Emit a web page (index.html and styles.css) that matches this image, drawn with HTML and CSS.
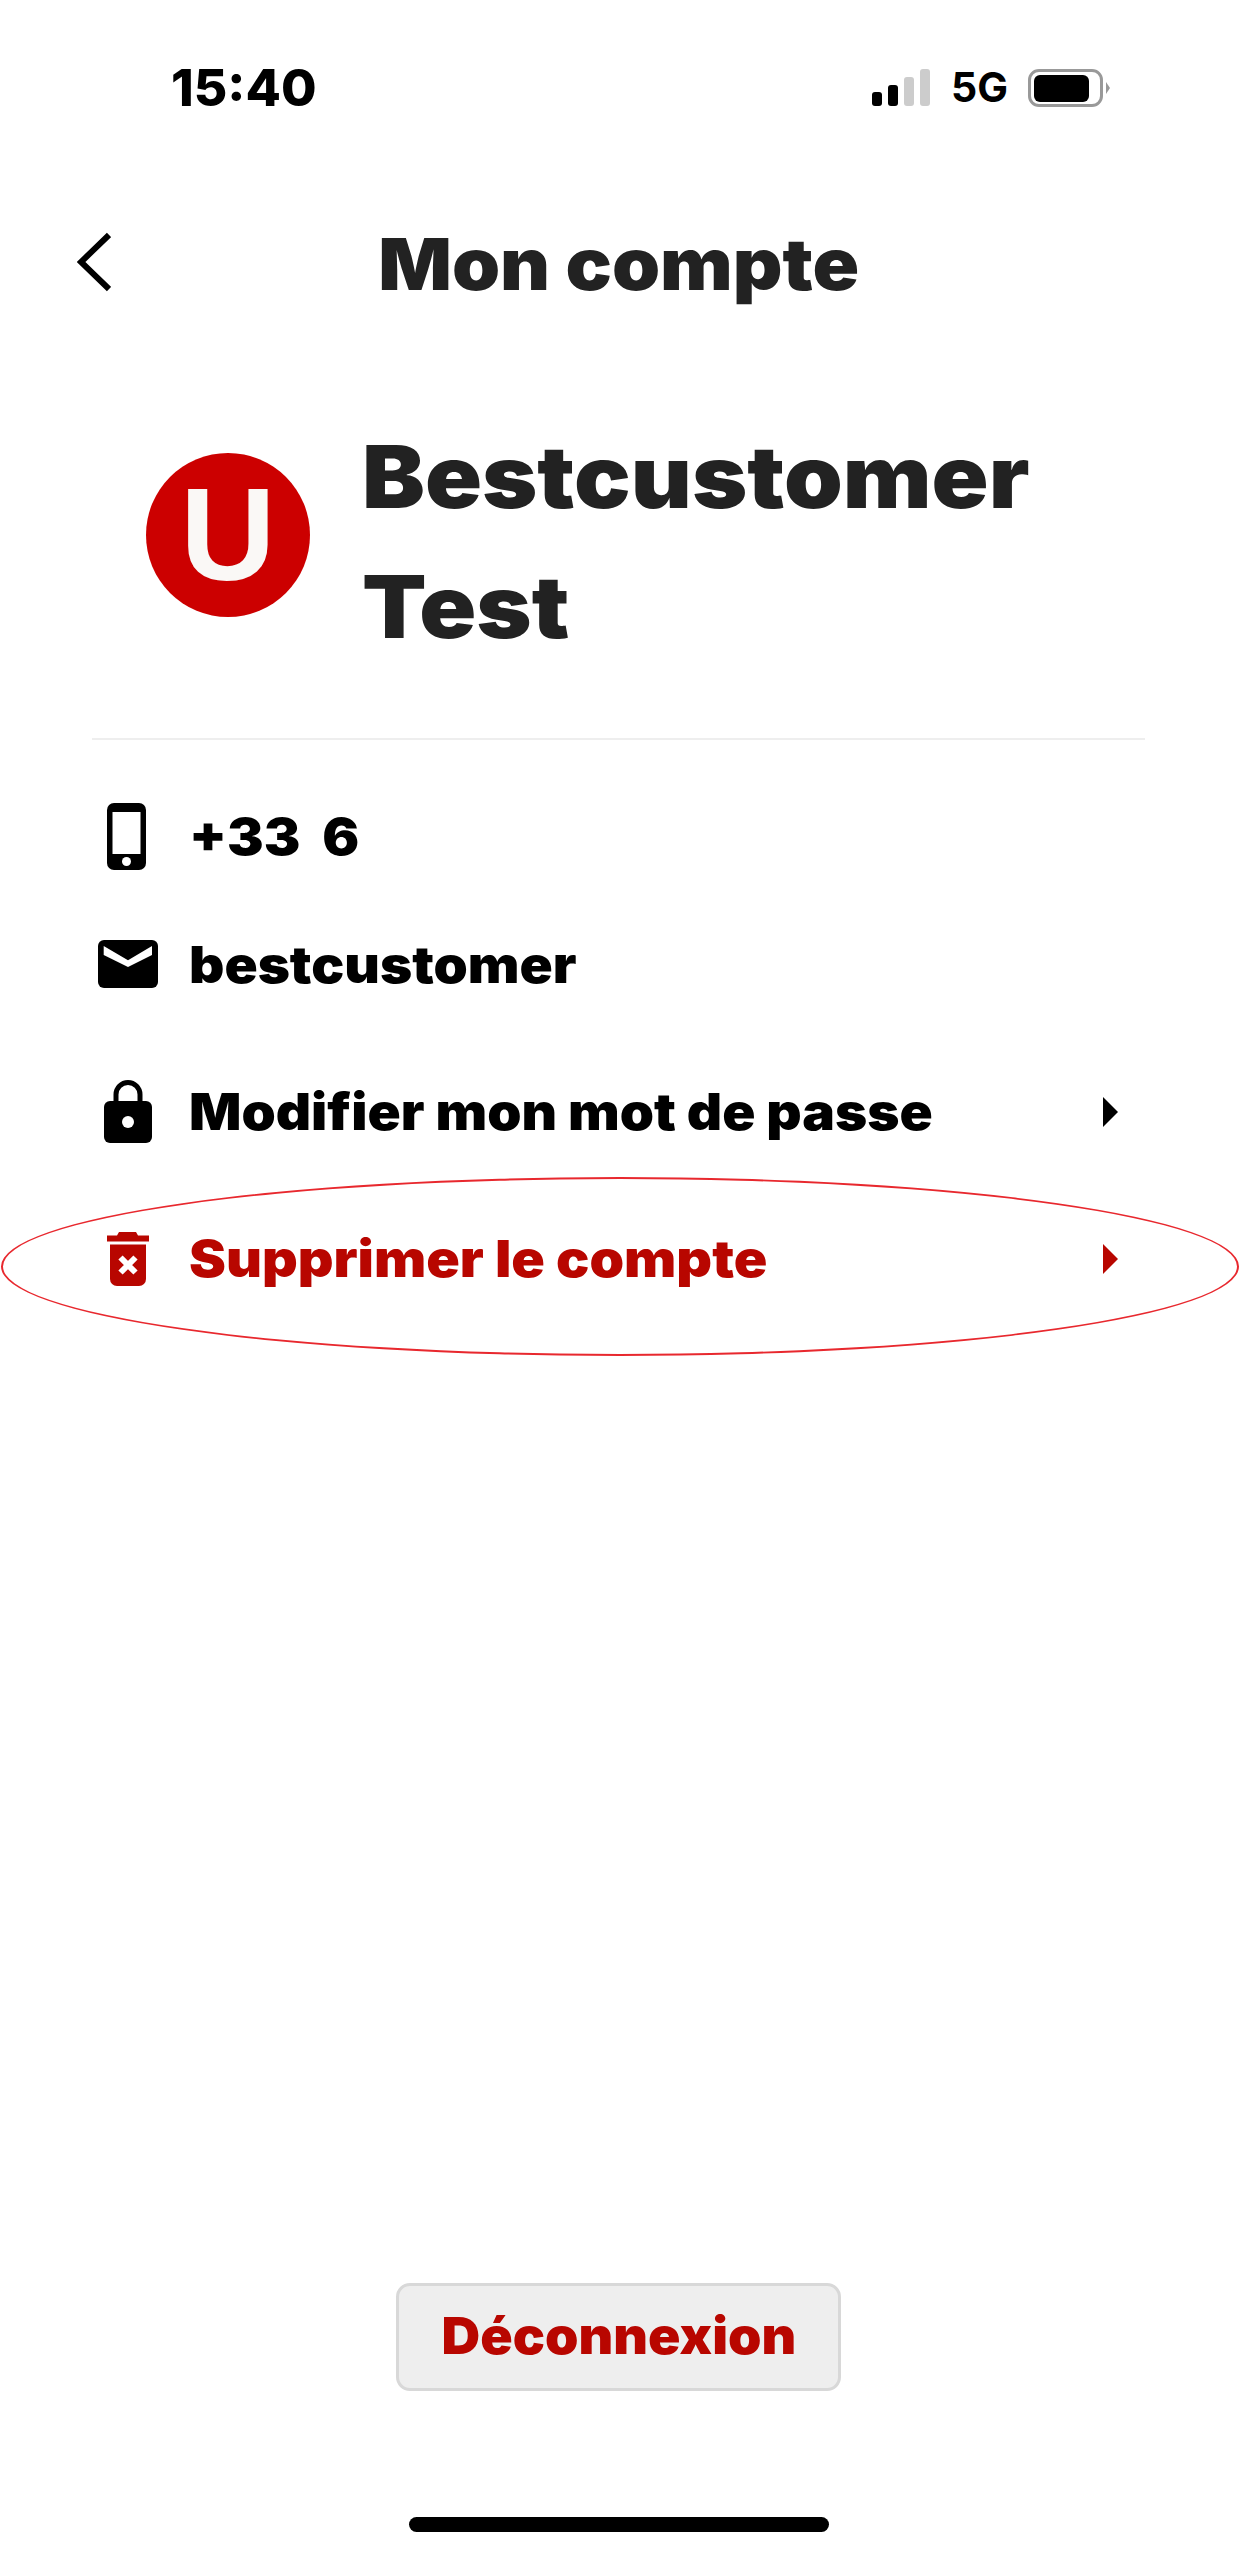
FILE: index.html
```html
<!DOCTYPE html>
<html lang="fr">
<head>
    <meta charset="UTF-8">
    <meta name="viewport" content="width=device-width, initial-scale=1">
    <title>Mon compte</title>
    <link rel="stylesheet" href="styles.css">
</head>
<body>
    <div class="status-bar">
        <span class="time">15:40</span>
        <div class="status-icons">
            <div class="signal">
                <span class="bar bar-1"></span>
                <span class="bar bar-2"></span>
                <span class="bar bar-3"></span>
                <span class="bar bar-4"></span>
            </div>
            <span class="network">5G</span>
            <div class="battery"><span class="battery-level"></span></div>
            <span class="battery-tip"></span>
        </div>
    </div>

    <header class="nav">
        <svg class="back" width="34" height="60" viewBox="0 0 34 60">
            <polyline points="32,3 4,30 32,57" fill="none" stroke="#000" stroke-width="6"/>
        </svg>
        <h2 class="nav-title">Mon compte</h2>
    </header>

    <section class="profile">
        <div class="avatar">U</div>
        <h1 class="name">Bestcustomer<br>Test</h1>
    </section>

    <main class="account-list">
        <div class="row info-row">
            <span class="row-icon phone-icon">
                <svg width="39" height="67" viewBox="0 0 39 67">
                    <rect width="39" height="67" rx="7" fill="#000"/>
                    <rect x="5.500" y="9" width="28" height="42" fill="#fff"/>
                    <circle cx="19.500" cy="58.500" r="4.500" fill="#fff"/>
                </svg>
            </span>
            <span class="row-label">+33&nbsp;&nbsp;6</span>
        </div>
        <div class="row info-row">
            <span class="row-icon">
                <svg width="60" height="48" viewBox="0 0 60 48">
                    <rect width="60" height="48" rx="6" fill="#000"/>
                    <polygon points="5.700,6 30,20.300 54,6 54,15 30,27 5.700,15" fill="#fff"/>
                </svg>
            </span>
            <span class="row-label">bestcustomer</span>
        </div>
        <div class="row action-row first-action">
            <span class="row-icon">
                <svg width="48" height="63" viewBox="0 0 48 63">
                    <path d="M12 24V14.500a12 12 0 0 1 24 0V24" fill="none" stroke="#000" stroke-width="5"/>
                    <rect y="21" width="48" height="42" rx="6" fill="#000"/>
                    <circle cx="24" cy="42" r="6" fill="#fff"/>
                </svg>
            </span>
            <span class="row-label">Modifier mon mot de passe</span>
            <span class="arrow"></span>
        </div>
        <div class="row action-row danger">
            <span class="row-icon">
                <svg width="42" height="54" viewBox="0 0 42 54">
                    <path d="M0 3.500H10L12 0H29L31 3.500H42V9.500H0Z" fill="#b80600"/>
                    <path d="M3 12.500H39V47a7 7 0 0 1-7 7H10a7 7 0 0 1-7-7Z" fill="#b80600"/>
                    <path d="M13.500 25.500L28.500 40.500M28.500 25.500L13.500 40.500" stroke="#fff" stroke-width="6" fill="none"/>
                </svg>
            </span>
            <span class="row-label">Supprimer le compte</span>
            <span class="arrow"></span>
            <span class="highlight-ring"></span>
        </div>
    </main>

    <footer class="page-footer">
        <button class="logout-btn"><span class="logout-label">Déconnexion</span></button>
        <div class="home-bar"></div>
    </footer>
</body>
</html>
```

FILE: styles.css
```css
body {
    margin: 0;
    width: 1239px;
    min-height: 2556px;
    font-family: Inter, "Liberation Sans", Arial, sans-serif;
    background: #fff;
    color: #000;
    display: flex;
    flex-direction: column;
}

/* status bar */
.status-bar {
    height: 175px;
    padding: 0 129px 0 171px;
    display: flex;
    align-items: center;
    justify-content: space-between;
}
.time {
    font-size: 51px;
    font-weight: 800;
    line-height: 1;
    transform: scaleX(1.01);
    transform-origin: left;
}
.status-icons {
    display: flex;
    align-items: center;
}
.signal {
    display: flex;
    align-items: flex-end;
    gap: 6px;
    height: 37px;
    margin-right: 21px;
}
.bar {
    width: 10px;
    border-radius: 3px;
    background: #000;
}
.bar-1 { height: 14px; }
.bar-2 { height: 21px; }
.bar-3 { height: 29px; background: #ccc; }
.bar-4 { height: 37px; background: #ccc; }
.network {
    font-size: 41px;
    font-weight: 700;
    line-height: 1;
    margin-right: 20px;
}
.battery {
    width: 75px;
    height: 38px;
    box-sizing: border-box;
    border: 3px solid #999;
    border-radius: 11px;
    padding: 3px 11px 2px 3px;
}
.battery-level {
    display: block;
    height: 100%;
    border-radius: 6px;
    background: #000;
}
.battery-tip {
    width: 0;
    height: 0;
    margin-left: 3px;
    border-left: 4px solid #999;
    border-top: 6px solid transparent;
    border-bottom: 6px solid transparent;
}

/* nav */
.nav {
    height: 178px;
    display: grid;
    grid-template-columns: 1fr auto 1fr;
    align-items: center;
}
.back {
    margin: -4px 0 0 77px;
}
.nav-title {
    margin: 0 0 2px;
    font-size: 72px;
    font-weight: 900;
    color: #222;
    transform: translateX(-1px) scaleX(1.07);
}

/* profile */
.profile {
    margin: 0 94px 0 92px;
    padding: 59px 0 66px 54px;
    border-bottom: 2px solid #eee;
    display: flex;
    align-items: center;
    gap: 52px;
}
.avatar {
    width: 164px;
    height: 164px;
    flex-shrink: 0;
    margin-bottom: 14px;
    border-radius: 50%;
    background: #c00;
    color: #faf8f6;
    font-family: "Liberation Sans", Arial, sans-serif;
    font-size: 132px;
    font-weight: 700;
    line-height: 164px;
    text-align: center;
}
.name {
    margin: 0;
    font-size: 87px;
    font-weight: 900;
    line-height: 130px;
    color: #222;
    transform: scaleX(1.082);
    transform-origin: left;
}

/* rows */
.account-list {
    margin: 0 94px 0 92px;
    padding-top: 32px;
}
.row {
    position: relative;
    display: flex;
    align-items: center;
    gap: 25px;
    font-size: 51px;
    font-weight: 900;
}
.info-row {
    height: 128px;
}
.action-row {
    height: 147px;
}
.first-action {
    margin-top: 10px;
}
.row-icon {
    width: 72px;
    display: flex;
    justify-content: center;
}
.phone-icon svg {
    margin-right: 3px;
}
.row-label {
    white-space: nowrap;
    transform: scaleX(1.075);
    transform-origin: left;
}
.arrow {
    margin-left: auto;
    margin-right: 27px;
    border-left: 15px solid currentColor;
    border-top: 15px solid transparent;
    border-bottom: 15px solid transparent;
}
.danger {
    color: #b80600;
}
.danger .row-label {
    transform: scaleX(1.087);
}
.highlight-ring {
    position: absolute;
    left: -91px;
    top: -8px;
    width: 1238px;
    height: 179px;
    box-sizing: border-box;
    border: 2px solid #e8282e;
    border-radius: 50%;
}

/* bottom */
.page-footer {
    margin-top: auto;
    padding-right: 2px;
    display: flex;
    flex-direction: column;
    align-items: center;
}
.logout-btn {
    width: 445px;
    height: 108px;
    padding: 0 0 3px;
    border: 3px solid #d8d8d8;
    border-radius: 14px;
    background: #eee;
    color: #b80600;
    font-family: inherit;
    font-size: 51px;
    font-weight: 900;
}
.logout-label {
    display: inline-block;
    transform: scaleX(1.05);
}
.home-bar {
    width: 420px;
    height: 15px;
    margin: 126px 0 24px;
    border-radius: 8px;
    background: #000;
}
```
